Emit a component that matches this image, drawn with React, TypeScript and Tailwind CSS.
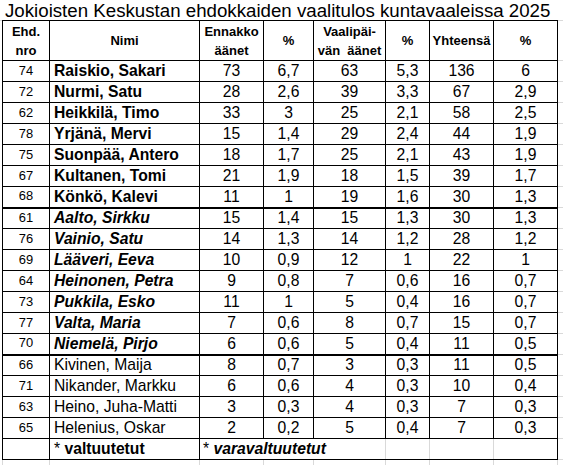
import React from 'react';

type Row = [string, string, string, string, string, string, string, string];

const elected: Row[] = [
  ['74', 'Raiskio, Sakari', '73', '6,7', '63', '5,3', '136', '6'],
  ['72', 'Nurmi, Satu', '28', '2,6', '39', '3,3', '67', '2,9'],
  ['62', 'Heikkilä, Timo', '33', '3', '25', '2,1', '58', '2,5'],
  ['78', 'Yrjänä, Mervi', '15', '1,4', '29', '2,4', '44', '1,9'],
  ['75', 'Suonpää, Antero', '18', '1,7', '25', '2,1', '43', '1,9'],
  ['67', 'Kultanen, Tomi', '21', '1,9', '18', '1,5', '39', '1,7'],
  ['68', 'Könkö, Kalevi', '11', '1', '19', '1,6', '30', '1,3'],
];

const deputies: Row[] = [
  ['61', 'Aalto, Sirkku', '15', '1,4', '15', '1,3', '30', '1,3'],
  ['76', 'Vainio, Satu', '14', '1,3', '14', '1,2', '28', '1,2'],
  ['69', 'Lääveri, Eeva', '10', '0,9', '12', '1', '22', '1'],
  ['64', 'Heinonen, Petra', '9', '0,8', '7', '0,6', '16', '0,7'],
  ['73', 'Pukkila, Esko', '11', '1', '5', '0,4', '16', '0,7'],
  ['77', 'Valta, Maria', '7', '0,6', '8', '0,7', '15', '0,7'],
  ['70', 'Niemelä, Pirjo', '6', '0,6', '5', '0,4', '11', '0,5'],
];

const others: Row[] = [
  ['66', 'Kivinen, Maija', '8', '0,7', '3', '0,3', '11', '0,5'],
  ['71', 'Nikander, Markku', '6', '0,6', '4', '0,3', '10', '0,4'],
  ['63', 'Heino, Juha-Matti', '3', '0,3', '4', '0,3', '7', '0,3'],
  ['65', 'Helenius, Oskar', '2', '0,2', '5', '0,4', '7', '0,3'],
];

const cell = 'border border-black p-0';

const DataRow = ({ row, nameClass, thickBottom }: { row: Row; nameClass: string; thickBottom?: boolean }) => {
  const b = thickBottom ? ' border-b-2' : '';
  return (
    <tr className="h-[21px]">
      <td className={`${cell}${b} text-center text-[12.9px]`}>{row[0]}</td>
      <td className={`${cell}${b} pl-[4px] text-left text-[15.7px] ${nameClass}`}>{row[1]}</td>
      {row.slice(2).map((v, i) => (
        <td key={i} className={`${cell}${b} text-center text-[15.7px]`}>
          {v}
        </td>
      ))}
      <td className="border-y border-[#d9d9d9]"></td>
    </tr>
  );
};

const App = () => {
  return (
    <div
      className="w-[563px] h-[465px] overflow-hidden bg-white text-black"
      style={{ fontFamily: '"Liberation Sans", Arial, sans-serif' }}
    >
      <div className="h-[21px] pl-[5px] text-[18.7px] leading-[21px] whitespace-nowrap border-b border-[#d9d9d9]">
        Jokioisten Keskustan ehdokkaiden vaalitulos kuntavaaleissa 2025
      </div>
      <table className="ml-[2px] border-collapse table-fixed w-[561px] leading-none -mt-px">
        <colgroup>
          <col className="w-[47px]" />
          <col className="w-[150px]" />
          <col className="w-[64px]" />
          <col className="w-[50px]" />
          <col className="w-[72px]" />
          <col className="w-[44px]" />
          <col className="w-[64px]" />
          <col className="w-[64px]" />
          <col className="w-[6px]" />
        </colgroup>
        <tbody>
          <tr className="h-[40px] text-[13px] font-bold">
            <td className={`${cell} text-center leading-[19px]`}>
              Ehd.
              <br />
              nro
            </td>
            <td className={`${cell} text-center`}>Nimi</td>
            <td className={`${cell} text-center leading-[19px]`}>
              Ennakko
              <br />
              äänet
            </td>
            <td className={`${cell} text-center`}>%</td>
            <td className={`${cell} text-center leading-[19px]`}>
              Vaalipäi-
              <br />
              vän&nbsp; äänet
            </td>
            <td className={`${cell} text-center`}>%</td>
            <td className={`${cell} text-center`}>Yhteensä</td>
            <td className={`${cell} text-center`}>%</td>
            <td className="border-y border-[#d9d9d9]"></td>
          </tr>
          {elected.map((r, i) => (
            <DataRow key={r[0]} row={r} nameClass="font-bold" thickBottom={i === elected.length - 1} />
          ))}
          {deputies.map((r, i) => (
            <DataRow key={r[0]} row={r} nameClass="font-bold italic" thickBottom={i === deputies.length - 1} />
          ))}
          {others.map((r) => (
            <DataRow key={r[0]} row={r} nameClass="font-normal" />
          ))}
          <tr className="h-[21px] text-[15.7px]">
            <td className={cell}></td>
            <td className={`${cell} pl-[4px] whitespace-nowrap`}>
              * <span className="font-bold">valtuutetut</span>
            </td>
            <td colSpan={3} className="border-y border-l border-black pl-[3px] whitespace-nowrap">
              * <span className="font-bold italic">varavaltuutetut</span>
            </td>
            <td className="border-y border-l border-black border-l-[#d9d9d9]"></td>
            <td className="border-y border-l border-black border-l-[#d9d9d9]"></td>
            <td className="border-y border-r border-l border-black border-l-[#d9d9d9]"></td>
            <td className="border-y border-[#d9d9d9]"></td>
          </tr>
          <tr className="h-[21px]">
            <td className="border border-[#d9d9d9]"></td>
            <td className="border border-[#d9d9d9]"></td>
            <td className="border border-[#d9d9d9]"></td>
            <td className="border border-[#d9d9d9]"></td>
            <td className="border border-[#d9d9d9]"></td>
            <td className="border border-[#d9d9d9]"></td>
            <td className="border border-[#d9d9d9]"></td>
            <td className="border border-[#d9d9d9]"></td>
            <td className="border border-[#d9d9d9]"></td>
          </tr>
        </tbody>
      </table>
    </div>
  );
};

export default App;
